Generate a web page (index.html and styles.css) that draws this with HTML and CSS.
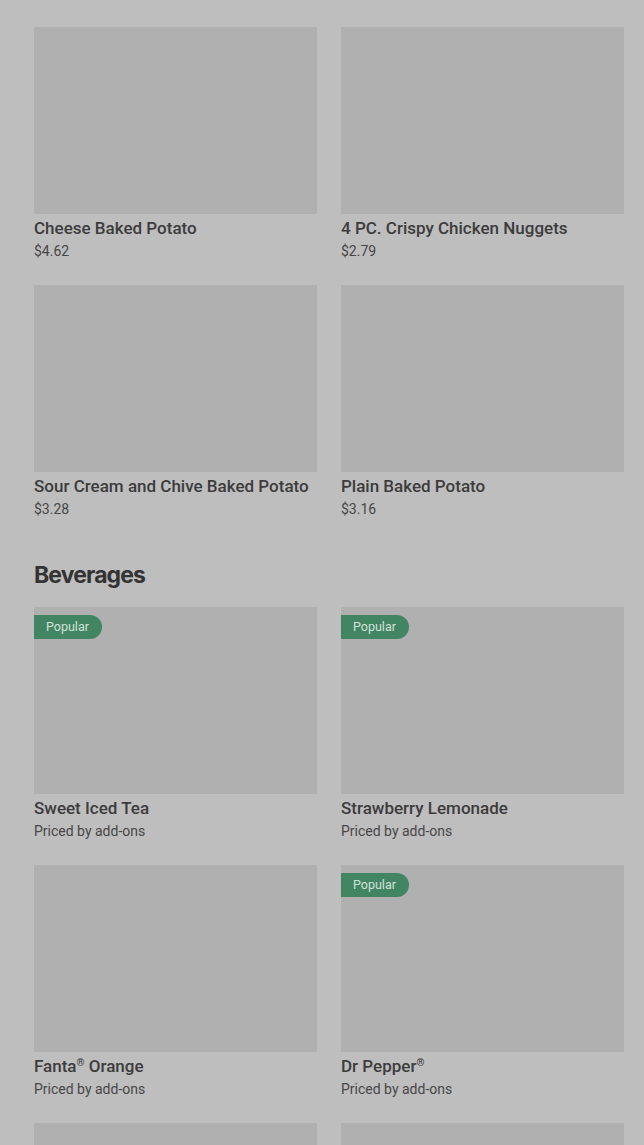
FILE: index.html
```html
<!DOCTYPE html>
<html lang="en">
<head>
<meta charset="utf-8">
<title>Menu</title>
<link rel="stylesheet" href="styles.css">
</head>
<body>
<main class="menu">
  <section class="section">
    <div class="grid">
      <div class="card"><div class="thumb"></div><div class="name">Chili Baked Potato</div><div class="price">$4.62</div></div>
      <div class="card"><div class="thumb"></div><div class="name">Chicken Nuggets</div><div class="price">$4.49</div></div>
      <div class="card"><div class="thumb"></div><div class="name">Cheese Baked Potato</div><div class="price">$4.62</div></div>
      <div class="card"><div class="thumb"></div><div class="name">4 PC. Crispy Chicken Nuggets</div><div class="price">$2.79</div></div>
      <div class="card"><div class="thumb"></div><div class="name">Sour Cream and Chive Baked Potato</div><div class="price">$3.28</div></div>
      <div class="card"><div class="thumb"></div><div class="name">Plain Baked Potato</div><div class="price">$3.16</div></div>
    </div>
  </section>
  <section class="section section-next">
    <h2 class="heading">Beverages</h2>
    <div class="grid">
      <div class="card"><div class="thumb"><span class="badge">Popular</span></div><div class="name">Sweet Iced Tea</div><div class="price">Priced by add-ons</div></div>
      <div class="card"><div class="thumb"><span class="badge">Popular</span></div><div class="name">Strawberry Lemonade</div><div class="price">Priced by add-ons</div></div>
      <div class="card"><div class="thumb"></div><div class="name">Fanta<span class="reg">®</span> Orange</div><div class="price">Priced by add-ons</div></div>
      <div class="card"><div class="thumb"><span class="badge">Popular</span></div><div class="name">Dr Pepper<span class="reg">®</span></div><div class="price">Priced by add-ons</div></div>
      <div class="card"><div class="thumb"></div><div class="name">Coca-Cola<span class="reg">®</span></div><div class="price">Priced by add-ons</div></div>
      <div class="card"><div class="thumb"></div><div class="name">Sprite<span class="reg">®</span></div><div class="price">Priced by add-ons</div></div>
    </div>
  </section>
</main>
</body>
</html>
```

FILE: styles.css
```css
html, body {
  margin: 0;
  padding: 0;
  background: #bebebe;
  overflow: hidden;
}
body {
  font-family: Roboto, "Liberation Sans", sans-serif;
  color: #3a3a3a;
}
.menu {
  margin-top: -231px;
  padding: 0 20px 0 34px;
}
.grid {
  display: grid;
  grid-template-columns: 283px 283px;
  column-gap: 24px;
  row-gap: 23px;
}
.thumb {
  position: relative;
  height: 187px;
  background: #b0b0b0;
}
.badge {
  position: absolute;
  left: 0;
  top: 8px;
  height: 24px;
  line-height: 24px;
  padding: 0 13px 0 12px;
  font-size: 12.5px;
  color: #d3e2d8;
  background: #418563;
  border-radius: 0 12px 12px 0;
}
.name {
  margin-top: 2px;
  font-size: 17px;
  line-height: 24px;
  font-weight: 500;
  color: #3c3c3c;
  white-space: nowrap;
}
.reg {
  font-size: 0.6em;
  vertical-align: 0.55em;
  line-height: 0;
}
.price {
  font-size: 14px;
  line-height: 22px;
  color: #474747;
}
.section-next {
  margin-top: 39px;
}
.heading {
  margin: 0 0 16px;
  font-family: Inter, "Liberation Sans", sans-serif;
  font-size: 23px;
  line-height: 32px;
  font-weight: 700;
  letter-spacing: -0.9px;
  color: #333;
}
```
